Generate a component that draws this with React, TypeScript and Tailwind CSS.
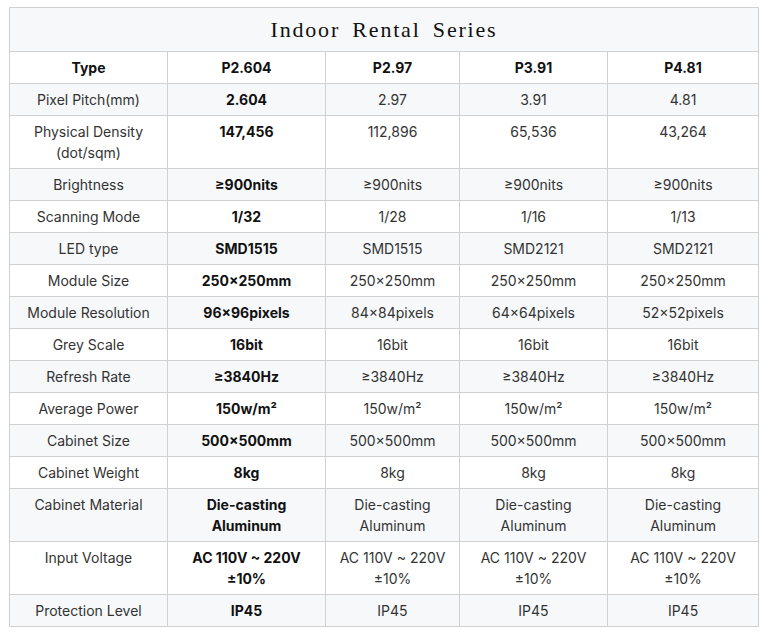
import React from "react";

type Row = { label: string; values: [string, string, string, string] };

const rows: Row[] = [
  { label: "Pixel Pitch(mm)", values: ["2.604", "2.97", "3.91", "4.81"] },
  { label: "Physical Density\n(dot/sqm)", values: ["147,456", "112,896", "65,536", "43,264"] },
  { label: "Brightness", values: ["≥900nits", "≥900nits", "≥900nits", "≥900nits"] },
  { label: "Scanning Mode", values: ["1/32", "1/28", "1/16", "1/13"] },
  { label: "LED type", values: ["SMD1515", "SMD1515", "SMD2121", "SMD2121"] },
  { label: "Module Size", values: ["250×250mm", "250×250mm", "250×250mm", "250×250mm"] },
  { label: "Module Resolution", values: ["96×96pixels", "84×84pixels", "64×64pixels", "52×52pixels"] },
  { label: "Grey Scale", values: ["16bit", "16bit", "16bit", "16bit"] },
  { label: "Refresh Rate", values: ["≥3840Hz", "≥3840Hz", "≥3840Hz", "≥3840Hz"] },
  { label: "Average Power", values: ["150w/m²", "150w/m²", "150w/m²", "150w/m²"] },
  { label: "Cabinet Size", values: ["500×500mm", "500×500mm", "500×500mm", "500×500mm"] },
  { label: "Cabinet Weight", values: ["8kg", "8kg", "8kg", "8kg"] },
  {
    label: "Cabinet Material",
    values: ["Die-casting\nAluminum", "Die-casting\nAluminum", "Die-casting\nAluminum", "Die-casting\nAluminum"],
  },
  {
    label: "Input Voltage",
    values: ["AC 110V ~ 220V\n±10%", "AC 110V ~ 220V\n±10%", "AC 110V ~ 220V\n±10%", "AC 110V ~ 220V\n±10%"],
  },
  { label: "Protection Level", values: ["IP45", "IP45", "IP45", "IP45"] },
];

const cell = "border border-[#d0d0d0] px-[6px] py-[5px] text-center align-top whitespace-pre-line";

export default function App() {
  return (
    <div className="bg-white min-h-[633px] pt-[7px] pl-[9px]">
      <table
        className="w-[749px] table-fixed border-collapse text-[14px] leading-[21px] text-[#333]"
        style={{ fontFamily: "Inter, 'Noto Sans', sans-serif" }}
      >
        <colgroup>
          <col className="w-[158px]" />
          <col className="w-[158px]" />
          <col className="w-[134px]" />
          <col className="w-[148px]" />
          <col className="w-[151px]" />
        </colgroup>
        <thead>
          <tr className="bg-[#f6f8fa]">
            <th
              colSpan={5}
              className="border border-[#d0d0d0] py-[5px] text-center text-[22px] leading-[33px] font-normal tracking-[1.8px] [word-spacing:5px] text-[#111]"
              style={{ fontFamily: "'Liberation Serif', 'DejaVu Serif', serif" }}
            >
              Indoor Rental Series
            </th>
          </tr>
          <tr className="bg-white">
            {["Type", "P2.604", "P2.97", "P3.91", "P4.81"].map((h) => (
              <th key={h} className={`${cell} font-bold text-[#111]`}>
                {h}
              </th>
            ))}
          </tr>
        </thead>
        <tbody>
          {rows.map((r, i) => (
            <tr key={r.label} className={i % 2 === 0 ? "bg-[#f6f8fa]" : "bg-white"}>
              <td className={cell}>{r.label}</td>
              {r.values.map((v, j) => (
                <td key={j} className={`${cell} ${j === 0 ? "font-bold text-[#111]" : ""}`}>
                  {v}
                </td>
              ))}
            </tr>
          ))}
        </tbody>
      </table>
    </div>
  );
}
